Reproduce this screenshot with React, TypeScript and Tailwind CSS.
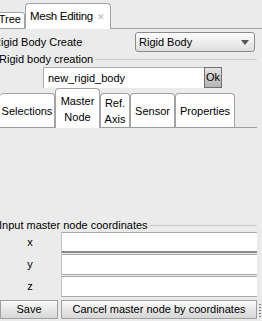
import React from "react";

function Tab({ children, selected, w, className = "" }: { children: React.ReactNode; selected?: boolean; w: string; className?: string }) {
  return (
    <div
      className={`${w} shrink-0 ${selected ? "h-[40px] border-b-0 bg-white" : "h-[35px] bg-white border-b border-b-[#9c9c9c]"} flex items-center justify-center text-center leading-[16px] whitespace-nowrap border-t border-l border-r border-[#a3a3a3] rounded-t-[4px] ${className}`}
    >
      {children}
    </div>
  );
}

function CoordRow({ label, strong }: { label: string; strong?: boolean }) {
  return (
    <div className="flex h-[22px] items-start">
      <div className="w-[60px] h-[21px] flex items-center justify-center">{label}</div>
      <div
        className={`ml-[1px] w-[196px] h-[21px] bg-white border-t border-t-[#a8a8a8] border-l border-l-[#c4c4c4] ${strong ? "border-b-2 border-b-[#8a8a8a]" : "border-b border-b-[#a8a8a8]"}`}
      />
    </div>
  );
}

export default function App() {
  return (
    <div className="w-[262px] h-[321px] bg-[#ebebeb] overflow-hidden flex flex-col text-[11px] leading-none text-black font-['Liberation_Sans',Arial,sans-serif]">
      {/* top tabs */}
      <div className="h-[29px] flex items-end shrink-0">
        <div className="shrink-0 ml-[-4px] w-[29px] h-[17px] bg-white border border-[#a3a3a3] rounded-tr-[3px] flex items-center justify-end pr-[3px] pb-[2px]">
          Tree
        </div>
        <div className="shrink-0 w-[86px] h-[26px] bg-white border border-b-0 border-[#a3a3a3] rounded-t-[4px] flex items-center pl-[4px] pt-[1px] whitespace-nowrap">
          <span className="text-[11.5px] tracking-[-0.3px]">Mesh Editing</span>
          <span className="ml-[4px] text-[9px] text-[#b4b4b4]">✕</span>
        </div>
        <div className="flex-1 border-b border-[#a3a3a3]" />
      </div>

      {/* Rigid Body Create */}
      <div className="mt-[3px] h-[20px] flex items-center justify-between shrink-0 whitespace-nowrap">
        <span className="ml-[-7px]">Rigid Body Create</span>
        <div className="mr-[7px] w-[120px] h-[20px] rounded-[3px] border border-[#8c8c8c] bg-gradient-to-b from-[#fdfdfd] to-[#dedede] flex items-center justify-between pl-[3px] pr-[5px]">
          <span>Rigid Body</span>
          <svg width="8" height="5" viewBox="0 0 8 5">
            <polygon points="0,0 8,0 4,5" fill="#555" />
          </svg>
        </div>
      </div>

      {/* group title */}
      <div className="h-[15px] flex items-center shrink-0 whitespace-nowrap">
        <span className="ml-[-1px]">Rigid body creation</span>
        <div className="flex-1 h-px bg-[#cacaca] ml-[2px] mr-[5px]" />
      </div>

      {/* name input */}
      <div className="h-[21px] flex pl-[43px] shrink-0">
        <div className="w-[161px] h-[21px] bg-white border-t border-l border-[#b0b0b0] flex items-center pl-[4px] text-[11px]">
          new_rigid_body
        </div>
        <div className="w-[18px] h-[21px] border border-[#707070] bg-gradient-to-b from-[#e4e4e4] to-[#b4b4b4] flex items-center justify-center">
          Ok
        </div>
      </div>

      {/* inner tabs */}
      <div className="h-[40px] flex items-end shrink-0">
        <Tab w="w-[55px]" className="border-l-0">Selections</Tab>
        <Tab w="w-[45px]" selected>
          <span>Master<br />Node</span>
        </Tab>
        <Tab w="w-[30px]">
          <span>Ref.<br />Axis</span>
        </Tab>
        <Tab w="w-[45px]">Sensor</Tab>
        <Tab w="w-[60px]">Properties</Tab>
        <div className="flex-1 mr-[5px] border-b border-[#9c9c9c]" />
      </div>

      <div className="flex-1" />

      {/* bottom section */}
      <div className="shrink-0 flex flex-col">
        <div className="h-[14px] flex items-center whitespace-nowrap">
          <span className="ml-[-1px]">Input master node coordinates</span>
          <div className="flex-1 h-px bg-[#cacaca] ml-[2px] mr-[5px]" />
        </div>
        <CoordRow label="x" strong />
        <CoordRow label="y" />
        <CoordRow label="z" />
        <div className="mt-[2px] h-[20px] flex items-start whitespace-nowrap">
          <div className="w-[58px] h-[19px] border border-[#a0a0a0] bg-gradient-to-b from-[#fbfbfb] to-[#d6d6d6] flex items-center justify-center">
            Save
          </div>
          <div className="ml-[3px] w-[196px] h-[19px] border border-[#a0a0a0] bg-gradient-to-b from-[#fbfbfb] to-[#d6d6d6] flex items-center justify-center">
            Cancel master node by coordinates
          </div>
          <div className="ml-[2px] mt-[4px] w-[2px] h-[14px] flex flex-col gap-[2px]">
            <div className="w-[2px] h-[1px] bg-[#777]" />
            <div className="w-[2px] h-[1px] bg-[#777]" />
            <div className="w-[2px] h-[1px] bg-[#777]" />
            <div className="w-[2px] h-[1px] bg-[#777]" />
            <div className="w-[2px] h-[1px] bg-[#777]" />
          </div>
        </div>
        <div className="h-[1px]" />
      </div>
    </div>
  );
}
